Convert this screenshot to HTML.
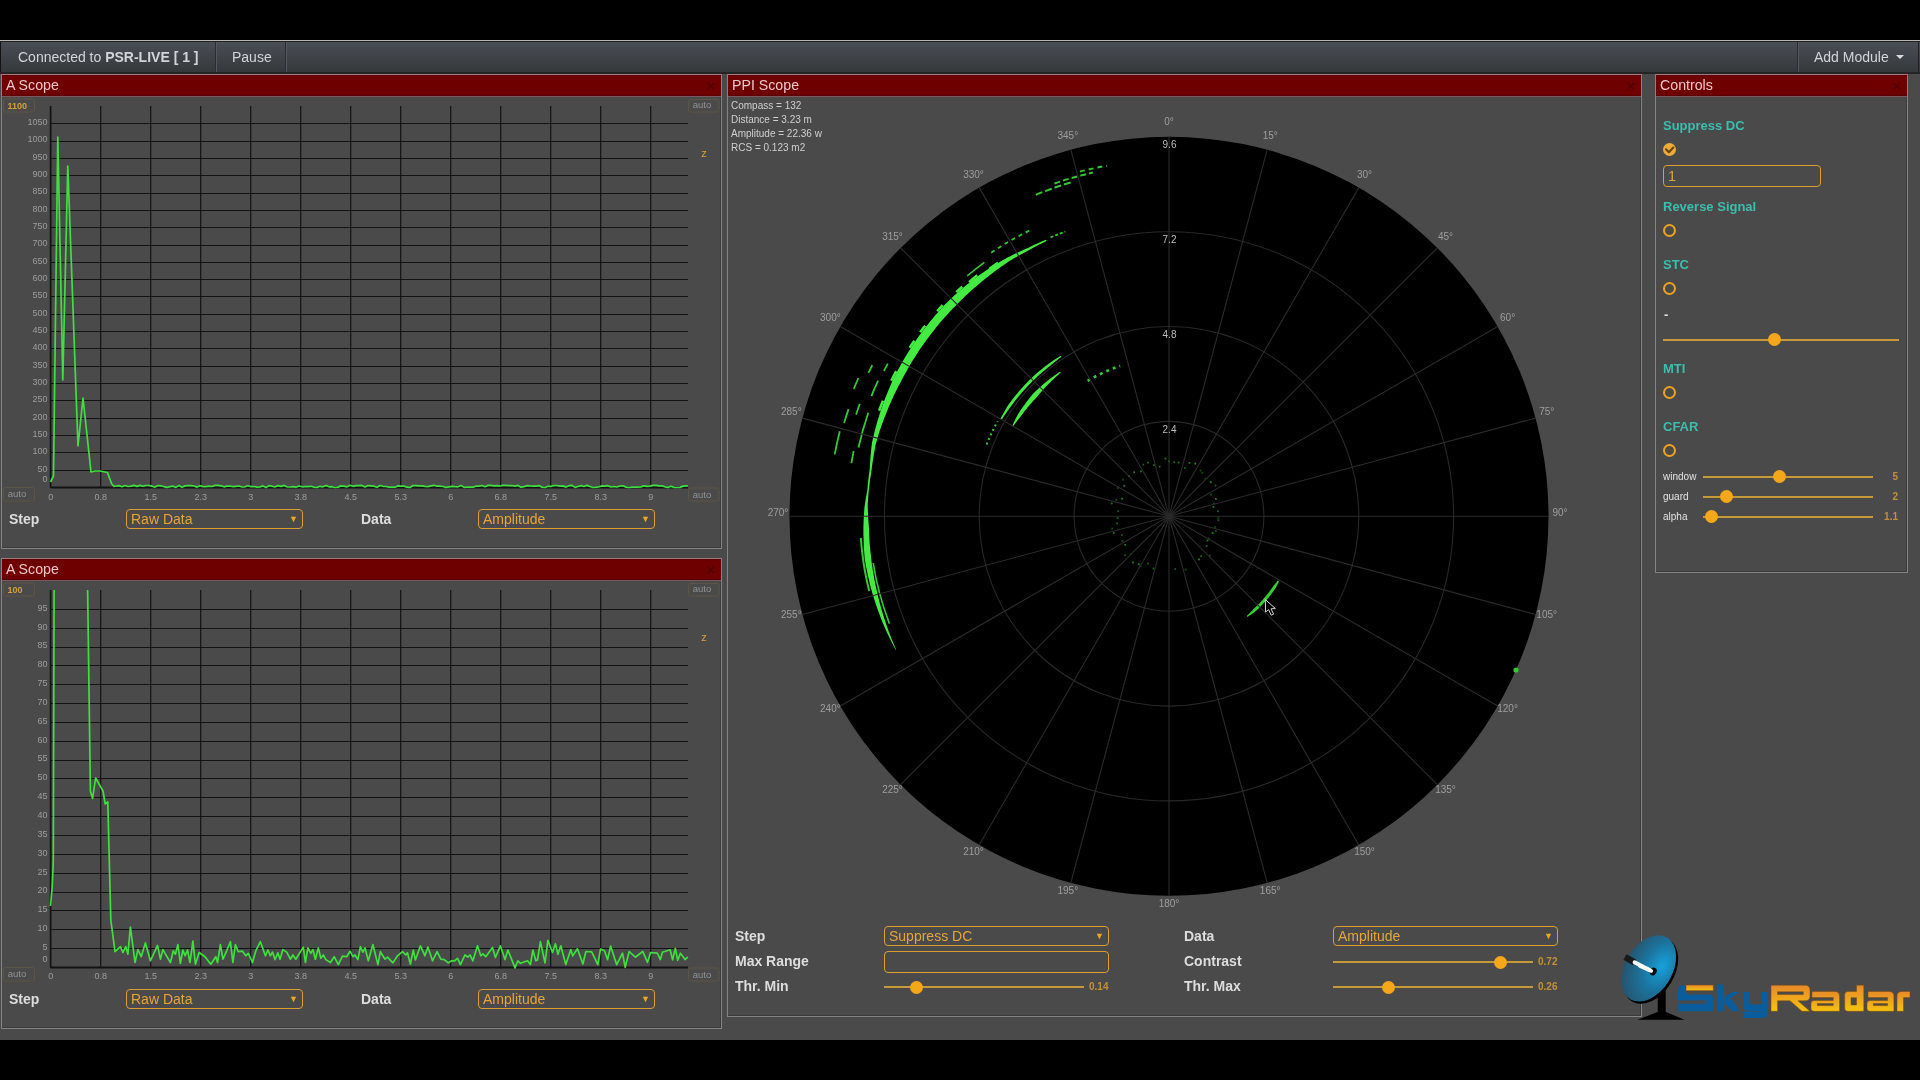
<!DOCTYPE html>
<html><head><meta charset="utf-8"><title>SkyRadar</title>
<style>
*{box-sizing:border-box;margin:0;padding:0}
html,body{width:1920px;height:1080px;overflow:hidden;background:#000;font-family:"Liberation Sans", sans-serif}
body{-webkit-font-smoothing:antialiased}
.aa{will-change:transform}
#app{position:absolute;left:0;top:40px;width:1920px;height:1000px;background:#4b4b4b}
#nav{position:absolute;left:0;top:40px;width:1920px;height:34px;border-top:1px solid #b8b8b8;
 background:linear-gradient(#202020 0,#202020 1px,#4b4f56 1px,#36393c 31px,#262626 31px,#262626 33px);}
.nv{position:absolute;top:1px;height:31px;color:#d2d6da;font-size:14px;line-height:31px}
.dv{position:absolute;top:1px;width:2px;height:30px;border-left:1px solid #2b2e31;border-right:1px solid #565a60}
.panel{position:absolute;background:#4b4b4b;border:1px solid #858585;border-top:none;box-shadow:inset -1px -1px 0 #3c3c3c}
.hdr{position:absolute;left:0;right:0;top:0;height:23px;background:#700000;border-top:1px solid #a87880;border-bottom:1px solid #7d5a60;box-shadow:inset 0 1px 1px #5a0008,inset 0 -1px 1px #5a0008;color:#f3c6cb;font-size:14.2px;line-height:21px;padding-left:4px}
.hdr i{position:absolute;right:6px;top:0;font-style:normal;font-weight:bold;font-size:15px;color:#560000}
.lbl{position:absolute;color:#dedede;font-size:14px;font-weight:bold;line-height:16px}
.sel{position:absolute;border:1.5px solid #dca030;border-radius:4px;color:#e6a63a;font-size:14px;line-height:18px;padding-left:4px}
.sel .ar{position:absolute;right:4px;top:0;font-size:9px;color:#f0a820}
svg{position:absolute;left:0;top:0}
.ctl{position:absolute;color:#3cbfae;font-size:13px;font-weight:bold;line-height:14px;margin-top:1px}
.rad{position:absolute;width:13px;height:13px;border:2px solid #f0a41e;border-radius:50%}
.trk{position:absolute;height:2px;background:#c89a3a}
.thm{position:absolute;width:13px;height:13px;border-radius:50%;background:#f5a81a}
.val{position:absolute;color:#c4913a;font-size:10px;font-weight:bold;line-height:10px;margin-top:1px}
.sm{position:absolute;color:#e3e3e3;font-size:10px;line-height:10px;margin-top:1px}
</style></head><body><div class="aa" style="position:absolute;left:0;top:0;width:1920px;height:1080px;opacity:0.999">
<div id="app"></div>
<div id="nav">
 <div style="position:absolute;left:0;top:1px;width:1px;height:30px;background:#141414"></div>
 <div style="position:absolute;left:1918px;top:1px;width:1px;height:30px;background:#222"></div>
 <div class="nv" style="left:18px">Connected to <b>PSR-LIVE [ 1 ]</b></div>
 <div class="dv" style="left:215px"></div>
 <div class="nv" style="left:232px">Pause</div>
 <div class="dv" style="left:285px"></div>
 <div class="dv" style="left:1797px"></div>
 <div class="nv" style="left:1814px">Add Module</div>
 <div style="position:absolute;left:1896px;top:14px;width:0;height:0;border-left:4px solid transparent;border-right:4px solid transparent;border-top:4px solid #dadde0"></div>
</div>

<div class="panel" style="left:1px;top:74px;width:721px;height:475px"><div class="hdr">A Scope<i>&#215;</i></div></div>
<div class="panel" style="left:1px;top:558px;width:721px;height:471px"><div class="hdr">A Scope<i>&#215;</i></div></div>
<div class="panel" style="left:727px;top:74px;width:915px;height:943px"><div class="hdr">PPI Scope<i>&#215;</i></div></div>
<div class="panel" style="left:1655px;top:74px;width:253px;height:499px"><div class="hdr">Controls<i>&#215;</i></div></div>

<svg width="1920" height="1080" style="font-family:"Liberation Sans", sans-serif">
<clipPath id="clip74"><rect x="0" y="106" width="720" height="391"/></clipPath>
<line x1="50.5" y1="470.5" x2="688" y2="470.5" stroke="#141414" stroke-width="1"/>
<line x1="50.5" y1="452.5" x2="688" y2="452.5" stroke="#141414" stroke-width="1"/>
<line x1="50.5" y1="435.5" x2="688" y2="435.5" stroke="#141414" stroke-width="1"/>
<line x1="50.5" y1="418.5" x2="688" y2="418.5" stroke="#141414" stroke-width="1"/>
<line x1="50.5" y1="400.5" x2="688" y2="400.5" stroke="#141414" stroke-width="1"/>
<line x1="50.5" y1="383.5" x2="688" y2="383.5" stroke="#141414" stroke-width="1"/>
<line x1="50.5" y1="366.5" x2="688" y2="366.5" stroke="#141414" stroke-width="1"/>
<line x1="50.5" y1="348.5" x2="688" y2="348.5" stroke="#141414" stroke-width="1"/>
<line x1="50.5" y1="331.5" x2="688" y2="331.5" stroke="#141414" stroke-width="1"/>
<line x1="50.5" y1="314.5" x2="688" y2="314.5" stroke="#141414" stroke-width="1"/>
<line x1="50.5" y1="296.5" x2="688" y2="296.5" stroke="#141414" stroke-width="1"/>
<line x1="50.5" y1="279.5" x2="688" y2="279.5" stroke="#141414" stroke-width="1"/>
<line x1="50.5" y1="262.5" x2="688" y2="262.5" stroke="#141414" stroke-width="1"/>
<line x1="50.5" y1="245.5" x2="688" y2="245.5" stroke="#141414" stroke-width="1"/>
<line x1="50.5" y1="227.5" x2="688" y2="227.5" stroke="#141414" stroke-width="1"/>
<line x1="50.5" y1="210.5" x2="688" y2="210.5" stroke="#141414" stroke-width="1"/>
<line x1="50.5" y1="193.5" x2="688" y2="193.5" stroke="#141414" stroke-width="1"/>
<line x1="50.5" y1="175.5" x2="688" y2="175.5" stroke="#141414" stroke-width="1"/>
<line x1="50.5" y1="158.5" x2="688" y2="158.5" stroke="#141414" stroke-width="1"/>
<line x1="50.5" y1="141.5" x2="688" y2="141.5" stroke="#141414" stroke-width="1"/>
<line x1="50.5" y1="123.5" x2="688" y2="123.5" stroke="#141414" stroke-width="1"/>
<line x1="50.7" y1="106" x2="50.7" y2="487.5" stroke="#121212" stroke-width="1.15"/>
<line x1="100.7" y1="106" x2="100.7" y2="487.5" stroke="#121212" stroke-width="1.15"/>
<line x1="150.7" y1="106" x2="150.7" y2="487.5" stroke="#121212" stroke-width="1.15"/>
<line x1="200.7" y1="106" x2="200.7" y2="487.5" stroke="#121212" stroke-width="1.15"/>
<line x1="250.7" y1="106" x2="250.7" y2="487.5" stroke="#121212" stroke-width="1.15"/>
<line x1="300.7" y1="106" x2="300.7" y2="487.5" stroke="#121212" stroke-width="1.15"/>
<line x1="350.7" y1="106" x2="350.7" y2="487.5" stroke="#121212" stroke-width="1.15"/>
<line x1="400.7" y1="106" x2="400.7" y2="487.5" stroke="#121212" stroke-width="1.15"/>
<line x1="450.7" y1="106" x2="450.7" y2="487.5" stroke="#121212" stroke-width="1.15"/>
<line x1="500.7" y1="106" x2="500.7" y2="487.5" stroke="#121212" stroke-width="1.15"/>
<line x1="550.7" y1="106" x2="550.7" y2="487.5" stroke="#121212" stroke-width="1.15"/>
<line x1="600.7" y1="106" x2="600.7" y2="487.5" stroke="#121212" stroke-width="1.15"/>
<line x1="650.7" y1="106" x2="650.7" y2="487.5" stroke="#121212" stroke-width="1.15"/>
<line x1="50.5" y1="487.5" x2="688" y2="487.5" stroke="#141414" stroke-width="2"/>
<line x1="50.5" y1="106" x2="50.5" y2="487.5" stroke="#141414" stroke-width="1.5"/>
<text x="47.5" y="481.8" font-size="9" fill="#9e9e9e" font-weight="normal" text-anchor="end" >0</text>
<text x="47.5" y="471.5" font-size="9" fill="#9e9e9e" font-weight="normal" text-anchor="end" >50</text>
<text x="47.5" y="454.1" font-size="9" fill="#9e9e9e" font-weight="normal" text-anchor="end" >100</text>
<text x="47.5" y="436.8" font-size="9" fill="#9e9e9e" font-weight="normal" text-anchor="end" >150</text>
<text x="47.5" y="419.5" font-size="9" fill="#9e9e9e" font-weight="normal" text-anchor="end" >200</text>
<text x="47.5" y="402.2" font-size="9" fill="#9e9e9e" font-weight="normal" text-anchor="end" >250</text>
<text x="47.5" y="384.9" font-size="9" fill="#9e9e9e" font-weight="normal" text-anchor="end" >300</text>
<text x="47.5" y="367.6" font-size="9" fill="#9e9e9e" font-weight="normal" text-anchor="end" >350</text>
<text x="47.5" y="350.2" font-size="9" fill="#9e9e9e" font-weight="normal" text-anchor="end" >400</text>
<text x="47.5" y="332.9" font-size="9" fill="#9e9e9e" font-weight="normal" text-anchor="end" >450</text>
<text x="47.5" y="315.6" font-size="9" fill="#9e9e9e" font-weight="normal" text-anchor="end" >500</text>
<text x="47.5" y="298.3" font-size="9" fill="#9e9e9e" font-weight="normal" text-anchor="end" >550</text>
<text x="47.5" y="281.0" font-size="9" fill="#9e9e9e" font-weight="normal" text-anchor="end" >600</text>
<text x="47.5" y="263.6" font-size="9" fill="#9e9e9e" font-weight="normal" text-anchor="end" >650</text>
<text x="47.5" y="246.3" font-size="9" fill="#9e9e9e" font-weight="normal" text-anchor="end" >700</text>
<text x="47.5" y="229.0" font-size="9" fill="#9e9e9e" font-weight="normal" text-anchor="end" >750</text>
<text x="47.5" y="211.7" font-size="9" fill="#9e9e9e" font-weight="normal" text-anchor="end" >800</text>
<text x="47.5" y="194.4" font-size="9" fill="#9e9e9e" font-weight="normal" text-anchor="end" >850</text>
<text x="47.5" y="177.1" font-size="9" fill="#9e9e9e" font-weight="normal" text-anchor="end" >900</text>
<text x="47.5" y="159.7" font-size="9" fill="#9e9e9e" font-weight="normal" text-anchor="end" >950</text>
<text x="47.5" y="142.4" font-size="9" fill="#9e9e9e" font-weight="normal" text-anchor="end" >1000</text>
<text x="47.5" y="125.1" font-size="9" fill="#9e9e9e" font-weight="normal" text-anchor="end" >1050</text>
<text x="50.8" y="499.8" font-size="9" fill="#9e9e9e" font-weight="normal" text-anchor="middle" >0</text>
<text x="100.8" y="499.8" font-size="9" fill="#9e9e9e" font-weight="normal" text-anchor="middle" >0.8</text>
<text x="150.8" y="499.8" font-size="9" fill="#9e9e9e" font-weight="normal" text-anchor="middle" >1.5</text>
<text x="200.8" y="499.8" font-size="9" fill="#9e9e9e" font-weight="normal" text-anchor="middle" >2.3</text>
<text x="250.8" y="499.8" font-size="9" fill="#9e9e9e" font-weight="normal" text-anchor="middle" >3</text>
<text x="300.8" y="499.8" font-size="9" fill="#9e9e9e" font-weight="normal" text-anchor="middle" >3.8</text>
<text x="350.8" y="499.8" font-size="9" fill="#9e9e9e" font-weight="normal" text-anchor="middle" >4.5</text>
<text x="400.8" y="499.8" font-size="9" fill="#9e9e9e" font-weight="normal" text-anchor="middle" >5.3</text>
<text x="450.8" y="499.8" font-size="9" fill="#9e9e9e" font-weight="normal" text-anchor="middle" >6</text>
<text x="500.8" y="499.8" font-size="9" fill="#9e9e9e" font-weight="normal" text-anchor="middle" >6.8</text>
<text x="550.8" y="499.8" font-size="9" fill="#9e9e9e" font-weight="normal" text-anchor="middle" >7.5</text>
<text x="600.8" y="499.8" font-size="9" fill="#9e9e9e" font-weight="normal" text-anchor="middle" >8.3</text>
<text x="650.8" y="499.8" font-size="9" fill="#9e9e9e" font-weight="normal" text-anchor="middle" >9</text>
<rect x="3.5" y="99.0" width="31" height="13" rx="2" fill="none" stroke="#5e5646" stroke-width="1"/>
<text x="7.5" y="108.6" font-size="9" fill="#d4a23a" font-weight="bold" text-anchor="start" >1100</text>
<rect x="688.5" y="99.5" width="30.5" height="12.5" rx="2" fill="none" stroke="#5e5646" stroke-width="1"/>
<text x="702.0" y="109.1" font-size="9.5" fill="#939393" font-weight="normal" text-anchor="middle" dy="-1">auto</text>
<rect x="3.5" y="487.5" width="31" height="13.5" rx="2" fill="none" stroke="#5e5646" stroke-width="1"/>
<text x="17.0" y="498.0" font-size="9.5" fill="#939393" font-weight="normal" text-anchor="middle" dy="-1">auto</text>
<rect x="688.5" y="488.0" width="30.5" height="13" rx="2" fill="none" stroke="#5e5646" stroke-width="1"/>
<text x="702.0" y="498.5" font-size="9.5" fill="#939393" font-weight="normal" text-anchor="middle" dy="-1">auto</text>
<text x="704.0" y="158.0" font-size="11" fill="#dca035" font-weight="normal" text-anchor="middle" dy="-1.5">z</text>
<polyline points="50.5,482.0 53.5,476.0 57.8,137.0 62.8,380.0 67.8,166.0 78.0,446.0 83.0,398.0 91.0,472.0 95.0,471.0 100.0,471.0 107.5,472.5 111.5,483.5 114.0,486.5 116.0,486.0 119.0,485.6 122.0,486.7 125.0,485.5 128.0,486.5 131.0,486.1 134.0,485.4 137.0,486.4 140.0,485.4 143.0,486.3 146.0,485.5 149.0,485.5 152.0,486.2 155.0,487.1 158.0,485.6 161.0,485.8 164.0,486.7 167.0,487.4 170.0,486.6 173.0,486.2 176.0,487.4 179.0,485.4 182.0,487.2 185.0,485.9 188.0,485.6 191.0,485.6 194.0,486.0 197.0,487.1 200.0,485.7 203.0,486.6 206.0,486.7 209.0,486.1 212.0,486.5 215.0,485.4 218.0,485.4 221.0,485.8 224.0,486.8 227.0,486.2 230.0,486.0 233.0,486.6 236.0,486.3 239.0,486.0 242.0,487.0 245.0,486.8 248.0,485.8 251.0,486.6 254.0,486.5 257.0,487.2 260.0,486.9 263.0,485.9 266.0,487.5 269.0,485.6 272.0,486.2 275.0,487.0 278.0,485.6 281.0,486.4 284.0,485.4 287.0,486.8 290.0,487.0 293.0,486.6 296.0,487.2 299.0,486.0 302.0,486.8 305.0,486.6 308.0,486.6 311.0,486.3 314.0,487.1 317.0,487.4 320.0,486.3 323.0,486.8 326.0,485.4 329.0,486.8 332.0,486.7 335.0,487.5 338.0,487.1 341.0,485.9 344.0,486.1 347.0,486.8 350.0,485.3 353.0,486.3 356.0,485.7 359.0,485.6 362.0,485.4 365.0,487.0 368.0,485.6 371.0,485.8 374.0,486.2 377.0,487.2 380.0,485.5 383.0,486.3 386.0,486.5 389.0,487.2 392.0,487.1 395.0,487.2 398.0,485.9 401.0,486.2 404.0,486.1 407.0,487.2 410.0,487.4 413.0,485.6 416.0,485.7 419.0,485.8 422.0,485.8 425.0,486.4 428.0,486.6 431.0,485.9 434.0,485.3 437.0,486.2 440.0,486.1 443.0,486.5 446.0,487.4 449.0,486.8 452.0,486.4 455.0,486.7 458.0,486.8 461.0,485.4 464.0,487.3 467.0,487.0 470.0,487.2 473.0,487.1 476.0,486.2 479.0,486.2 482.0,485.5 485.0,486.7 488.0,485.4 491.0,485.4 494.0,485.8 497.0,485.7 500.0,486.0 503.0,485.4 506.0,485.3 509.0,485.6 512.0,485.5 515.0,486.1 518.0,485.4 521.0,487.2 524.0,486.7 527.0,485.6 530.0,485.9 533.0,486.1 536.0,486.1 539.0,485.6 542.0,487.2 545.0,487.5 548.0,486.3 551.0,486.4 554.0,485.5 557.0,485.5 560.0,486.1 563.0,485.9 566.0,487.1 569.0,485.7 572.0,485.4 575.0,487.4 578.0,486.5 581.0,485.6 584.0,486.5 587.0,485.4 590.0,486.5 593.0,487.5 596.0,487.2 599.0,486.8 602.0,485.9 605.0,486.1 608.0,485.7 611.0,487.0 614.0,486.5 617.0,487.0 620.0,486.0 623.0,485.8 626.0,487.1 629.0,487.5 632.0,487.2 635.0,487.1 638.0,487.1 641.0,486.9 644.0,485.8 647.0,486.4 650.0,486.1 653.0,485.4 656.0,485.4 659.0,485.9 662.0,485.9 665.0,486.8 668.0,487.4 671.0,486.3 674.0,487.4 677.0,487.5 680.0,487.4 683.0,486.1 686.0,485.8 688.0,486.0" fill="none" stroke="#40e040" stroke-width="1.7" stroke-linejoin="round" clip-path="url(#clip74)"/>
<clipPath id="clip558"><rect x="0" y="590" width="720" height="387"/></clipPath>
<line x1="50.5" y1="948.5" x2="688" y2="948.5" stroke="#141414" stroke-width="1"/>
<line x1="50.5" y1="929.5" x2="688" y2="929.5" stroke="#141414" stroke-width="1"/>
<line x1="50.5" y1="910.5" x2="688" y2="910.5" stroke="#141414" stroke-width="1"/>
<line x1="50.5" y1="892.5" x2="688" y2="892.5" stroke="#141414" stroke-width="1"/>
<line x1="50.5" y1="873.5" x2="688" y2="873.5" stroke="#141414" stroke-width="1"/>
<line x1="50.5" y1="854.5" x2="688" y2="854.5" stroke="#141414" stroke-width="1"/>
<line x1="50.5" y1="835.5" x2="688" y2="835.5" stroke="#141414" stroke-width="1"/>
<line x1="50.5" y1="816.5" x2="688" y2="816.5" stroke="#141414" stroke-width="1"/>
<line x1="50.5" y1="797.5" x2="688" y2="797.5" stroke="#141414" stroke-width="1"/>
<line x1="50.5" y1="778.5" x2="688" y2="778.5" stroke="#141414" stroke-width="1"/>
<line x1="50.5" y1="760.5" x2="688" y2="760.5" stroke="#141414" stroke-width="1"/>
<line x1="50.5" y1="741.5" x2="688" y2="741.5" stroke="#141414" stroke-width="1"/>
<line x1="50.5" y1="722.5" x2="688" y2="722.5" stroke="#141414" stroke-width="1"/>
<line x1="50.5" y1="703.5" x2="688" y2="703.5" stroke="#141414" stroke-width="1"/>
<line x1="50.5" y1="684.5" x2="688" y2="684.5" stroke="#141414" stroke-width="1"/>
<line x1="50.5" y1="665.5" x2="688" y2="665.5" stroke="#141414" stroke-width="1"/>
<line x1="50.5" y1="647.5" x2="688" y2="647.5" stroke="#141414" stroke-width="1"/>
<line x1="50.5" y1="628.5" x2="688" y2="628.5" stroke="#141414" stroke-width="1"/>
<line x1="50.5" y1="609.5" x2="688" y2="609.5" stroke="#141414" stroke-width="1"/>
<line x1="50.7" y1="590" x2="50.7" y2="967.5" stroke="#121212" stroke-width="1.15"/>
<line x1="100.7" y1="590" x2="100.7" y2="967.5" stroke="#121212" stroke-width="1.15"/>
<line x1="150.7" y1="590" x2="150.7" y2="967.5" stroke="#121212" stroke-width="1.15"/>
<line x1="200.7" y1="590" x2="200.7" y2="967.5" stroke="#121212" stroke-width="1.15"/>
<line x1="250.7" y1="590" x2="250.7" y2="967.5" stroke="#121212" stroke-width="1.15"/>
<line x1="300.7" y1="590" x2="300.7" y2="967.5" stroke="#121212" stroke-width="1.15"/>
<line x1="350.7" y1="590" x2="350.7" y2="967.5" stroke="#121212" stroke-width="1.15"/>
<line x1="400.7" y1="590" x2="400.7" y2="967.5" stroke="#121212" stroke-width="1.15"/>
<line x1="450.7" y1="590" x2="450.7" y2="967.5" stroke="#121212" stroke-width="1.15"/>
<line x1="500.7" y1="590" x2="500.7" y2="967.5" stroke="#121212" stroke-width="1.15"/>
<line x1="550.7" y1="590" x2="550.7" y2="967.5" stroke="#121212" stroke-width="1.15"/>
<line x1="600.7" y1="590" x2="600.7" y2="967.5" stroke="#121212" stroke-width="1.15"/>
<line x1="650.7" y1="590" x2="650.7" y2="967.5" stroke="#121212" stroke-width="1.15"/>
<line x1="50.5" y1="967.5" x2="688" y2="967.5" stroke="#141414" stroke-width="2"/>
<line x1="50.5" y1="590" x2="50.5" y2="967.5" stroke="#141414" stroke-width="1.5"/>
<text x="47.5" y="961.8" font-size="9" fill="#9e9e9e" font-weight="normal" text-anchor="end" >0</text>
<text x="47.5" y="949.9" font-size="9" fill="#9e9e9e" font-weight="normal" text-anchor="end" >5</text>
<text x="47.5" y="931.1" font-size="9" fill="#9e9e9e" font-weight="normal" text-anchor="end" >10</text>
<text x="47.5" y="912.2" font-size="9" fill="#9e9e9e" font-weight="normal" text-anchor="end" >15</text>
<text x="47.5" y="893.4" font-size="9" fill="#9e9e9e" font-weight="normal" text-anchor="end" >20</text>
<text x="47.5" y="874.5" font-size="9" fill="#9e9e9e" font-weight="normal" text-anchor="end" >25</text>
<text x="47.5" y="855.7" font-size="9" fill="#9e9e9e" font-weight="normal" text-anchor="end" >30</text>
<text x="47.5" y="836.8" font-size="9" fill="#9e9e9e" font-weight="normal" text-anchor="end" >35</text>
<text x="47.5" y="818.0" font-size="9" fill="#9e9e9e" font-weight="normal" text-anchor="end" >40</text>
<text x="47.5" y="799.1" font-size="9" fill="#9e9e9e" font-weight="normal" text-anchor="end" >45</text>
<text x="47.5" y="780.3" font-size="9" fill="#9e9e9e" font-weight="normal" text-anchor="end" >50</text>
<text x="47.5" y="761.4" font-size="9" fill="#9e9e9e" font-weight="normal" text-anchor="end" >55</text>
<text x="47.5" y="742.6" font-size="9" fill="#9e9e9e" font-weight="normal" text-anchor="end" >60</text>
<text x="47.5" y="723.7" font-size="9" fill="#9e9e9e" font-weight="normal" text-anchor="end" >65</text>
<text x="47.5" y="704.9" font-size="9" fill="#9e9e9e" font-weight="normal" text-anchor="end" >70</text>
<text x="47.5" y="686.0" font-size="9" fill="#9e9e9e" font-weight="normal" text-anchor="end" >75</text>
<text x="47.5" y="667.2" font-size="9" fill="#9e9e9e" font-weight="normal" text-anchor="end" >80</text>
<text x="47.5" y="648.3" font-size="9" fill="#9e9e9e" font-weight="normal" text-anchor="end" >85</text>
<text x="47.5" y="629.5" font-size="9" fill="#9e9e9e" font-weight="normal" text-anchor="end" >90</text>
<text x="47.5" y="610.6" font-size="9" fill="#9e9e9e" font-weight="normal" text-anchor="end" >95</text>
<text x="50.8" y="979.3" font-size="9" fill="#9e9e9e" font-weight="normal" text-anchor="middle" >0</text>
<text x="100.8" y="979.3" font-size="9" fill="#9e9e9e" font-weight="normal" text-anchor="middle" >0.8</text>
<text x="150.8" y="979.3" font-size="9" fill="#9e9e9e" font-weight="normal" text-anchor="middle" >1.5</text>
<text x="200.8" y="979.3" font-size="9" fill="#9e9e9e" font-weight="normal" text-anchor="middle" >2.3</text>
<text x="250.8" y="979.3" font-size="9" fill="#9e9e9e" font-weight="normal" text-anchor="middle" >3</text>
<text x="300.8" y="979.3" font-size="9" fill="#9e9e9e" font-weight="normal" text-anchor="middle" >3.8</text>
<text x="350.8" y="979.3" font-size="9" fill="#9e9e9e" font-weight="normal" text-anchor="middle" >4.5</text>
<text x="400.8" y="979.3" font-size="9" fill="#9e9e9e" font-weight="normal" text-anchor="middle" >5.3</text>
<text x="450.8" y="979.3" font-size="9" fill="#9e9e9e" font-weight="normal" text-anchor="middle" >6</text>
<text x="500.8" y="979.3" font-size="9" fill="#9e9e9e" font-weight="normal" text-anchor="middle" >6.8</text>
<text x="550.8" y="979.3" font-size="9" fill="#9e9e9e" font-weight="normal" text-anchor="middle" >7.5</text>
<text x="600.8" y="979.3" font-size="9" fill="#9e9e9e" font-weight="normal" text-anchor="middle" >8.3</text>
<text x="650.8" y="979.3" font-size="9" fill="#9e9e9e" font-weight="normal" text-anchor="middle" >9</text>
<rect x="3.5" y="583.0" width="31" height="13" rx="2" fill="none" stroke="#5e5646" stroke-width="1"/>
<text x="7.5" y="592.6" font-size="9" fill="#d4a23a" font-weight="bold" text-anchor="start" >100</text>
<rect x="688.5" y="583.5" width="30.5" height="12.5" rx="2" fill="none" stroke="#5e5646" stroke-width="1"/>
<text x="702.0" y="593.1" font-size="9.5" fill="#939393" font-weight="normal" text-anchor="middle" dy="-1">auto</text>
<rect x="3.5" y="967.5" width="31" height="13.5" rx="2" fill="none" stroke="#5e5646" stroke-width="1"/>
<text x="17.0" y="978.0" font-size="9.5" fill="#939393" font-weight="normal" text-anchor="middle" dy="-1">auto</text>
<rect x="688.5" y="968.0" width="30.5" height="13" rx="2" fill="none" stroke="#5e5646" stroke-width="1"/>
<text x="702.0" y="978.5" font-size="9.5" fill="#939393" font-weight="normal" text-anchor="middle" dy="-1">auto</text>
<text x="704.0" y="642.0" font-size="11" fill="#dca035" font-weight="normal" text-anchor="middle" dy="-1.5">z</text>
<polyline points="50.5,906.0 52.2,887.0 53.3,861.0 54.2,560.0 87.2,560.0 90.4,791.0 92.6,798.5 95.6,778.0 103.0,791.0 105.2,804.0 107.8,802.0 110.8,920.0 115.0,951.7 120.4,946.7 122.9,952.5 125.8,946.7 127.9,954.2 130.4,927.1 135.0,962.5 137.9,949.6 141.2,956.7 145.4,942.9 150.4,960.8 157.5,945.4 160.4,959.2 162.9,949.6 170.4,962.5 173.3,950.8 175.4,954.2 177.9,944.6 180.4,963.3 182.9,950.0 185.0,955.8 187.5,950.0 190.0,962.5 192.9,941.2 195.4,964.2 199.2,952.5 205.0,956.7 210.8,964.2 215.8,956.7 217.5,962.5 220.4,944.6 222.9,959.2 226.7,950.8 230.4,941.7 232.9,962.5 235.4,944.6 238.3,951.7 242.5,951.2 245.8,955.8 248.3,953.3 252.5,962.5 255.8,950.8 260.4,941.7 265.4,955.8 267.9,950.0 270.4,955.8 272.5,952.1 275.0,959.6 277.9,952.9 280.0,959.2 282.9,949.6 286.7,952.1 290.4,959.2 292.9,955.0 295.8,959.2 303.3,947.1 305.4,962.5 307.9,947.9 310.8,953.3 312.9,949.6 315.4,959.2 318.3,947.9 320.8,958.3 323.3,955.0 325.8,959.6 330.4,962.5 334.2,956.7 338.3,964.6 342.5,956.2 346.7,956.7 350.0,951.2 352.9,956.7 355.0,955.0 357.9,959.6 360.4,946.7 362.9,952.1 365.0,947.9 368.3,960.8 372.9,944.6 377.9,964.6 380.4,951.7 385.0,959.2 387.5,957.1 392.9,962.9 397.5,955.8 402.5,951.7 405.8,955.0 407.5,952.9 410.4,964.2 413.3,950.0 415.4,960.0 420.4,945.8 425.0,955.8 427.9,947.1 432.5,960.8 437.1,951.7 440.8,959.2 444.2,959.6 448.3,962.9 451.7,960.8 454.6,960.8 457.5,958.3 460.4,964.6 465.0,955.0 467.9,957.1 470.0,955.0 472.9,960.8 477.5,945.8 480.8,955.8 482.9,953.8 485.8,956.7 492.5,947.5 495.4,957.5 500.4,945.8 505.0,959.6 507.9,950.0 515.0,967.9 517.9,960.8 520.4,963.3 527.5,960.8 530.4,964.6 532.9,950.0 535.8,960.8 537.5,960.0 540.4,941.7 545.0,962.9 547.9,940.4 552.5,952.5 555.4,943.8 557.9,954.2 560.8,945.8 565.8,964.6 570.8,949.6 572.7,955.9 577.4,948.8 582.9,964.0 585.9,951.5 591.7,951.8 597.8,964.7 600.5,949.1 604.5,950.8 607.6,959.6 610.6,946.1 616.7,964.7 622.5,953.2 625.2,967.4 629.2,951.5 635.3,957.2 642.8,951.5 647.5,962.3 650.6,952.5 657.3,953.2 660.4,959.6 662.4,952.2 670.2,949.8 672.6,959.9 675.3,948.4 677.7,960.3 680.4,953.2 685.1,959.6 687.8,956.9" fill="none" stroke="#40e040" stroke-width="1.7" stroke-linejoin="round" clip-path="url(#clip558)"/>
<circle cx="1169" cy="516.3" r="379.5" fill="#000"/>
<polygon points="895.5,649.7 894.3,647.3 893.1,645.0 891.9,642.6 890.7,640.2 889.5,637.8 888.4,635.4 887.2,633.0 886.1,630.6 885.0,628.2 884.0,625.7 882.9,623.3 881.9,620.8 880.9,618.3 880.0,615.8 879.1,613.3 878.1,610.8 877.2,608.3 876.4,605.8 875.5,603.2 874.7,600.7 873.9,598.1 873.1,595.6 872.3,593.0 871.6,590.4 870.9,587.9 870.2,585.3 869.6,582.7 869.0,580.1 868.3,577.5 867.8,574.9 867.2,572.2 866.7,569.6 866.1,567.0 865.7,564.3 865.2,561.7 864.7,559.1 864.5,556.4 864.3,553.7 864.1,551.0 863.9,548.4 863.8,545.7 863.7,543.0 863.6,540.3 863.5,537.7 863.4,535.0 863.4,532.3 863.4,529.6 863.4,527.0 863.5,524.3 863.6,521.6 863.7,519.0 863.9,516.3 864.0,513.6 864.2,511.0 864.4,508.3 864.7,505.7 865.1,503.0 865.5,500.4 865.9,497.8 866.4,495.1 866.9,492.5 867.4,489.9 867.6,487.3 867.8,484.6 868.1,482.0 868.4,479.4 868.7,476.8 869.0,474.1 869.4,471.5 869.7,468.9 869.9,466.2 870.0,463.6 870.2,460.9 870.4,458.3 870.6,455.6 870.9,452.9 871.1,450.3 871.4,447.6 871.7,444.9 872.1,442.3 872.7,439.7 873.3,437.1 873.9,434.5 874.5,431.9 875.2,429.3 875.9,426.7 876.6,424.1 877.3,421.5 878.1,419.0 878.9,416.4 879.7,413.8 880.5,411.3 881.4,408.8 882.3,406.2 883.2,403.7 884.1,401.2 885.0,398.7 886.0,396.2 887.0,393.7 888.0,391.2 889.1,388.7 890.1,386.3 891.2,383.8 892.3,381.3 893.4,378.9 894.6,376.5 895.8,374.1 897.0,371.7 898.3,369.3 899.6,367.0 900.9,364.6 902.2,362.3 903.5,359.9 904.9,357.6 906.3,355.3 907.7,353.0 909.1,350.7 910.6,348.5 912.0,346.2 913.5,344.0 915.0,341.7 916.5,339.5 918.1,337.3 919.7,335.1 921.3,333.0 922.9,330.8 924.5,328.7 926.1,326.6 927.8,324.4 929.5,322.3 931.2,320.3 932.9,318.2 934.6,316.1 936.4,314.1 938.2,312.1 940.0,310.1 941.8,308.1 943.6,306.1 945.4,304.1 947.3,302.2 949.2,300.3 951.1,298.4 953.1,296.6 955.1,294.7 957.1,293.0 959.1,291.2 961.1,289.5 963.2,287.7 965.3,286.0 967.3,284.3 969.4,282.7 971.6,281.0 973.7,279.4 975.8,277.7 978.0,276.2 980.1,274.6 982.4,273.1 984.6,271.6 986.8,270.1 989.0,268.6 991.3,267.2 993.6,265.7 995.8,264.3 998.1,263.0 1000.4,261.6 1002.7,260.3 1005.0,258.9 1007.4,257.6 1009.8,256.4 1012.1,255.2 1014.5,254.1 1016.9,252.9 1019.3,251.8 1021.8,250.7 1024.2,249.6 1026.6,248.5 1029.0,247.4 1031.4,246.2 1033.8,245.1 1036.2,244.0 1038.6,242.9 1041.0,241.8 1043.4,240.8 1045.9,239.7 1046.5,241.1 1044.1,242.2 1041.7,243.4 1039.4,244.6 1037.1,245.8 1034.7,247.0 1032.4,248.2 1030.1,249.5 1027.8,250.8 1025.5,252.0 1023.2,253.2 1020.9,254.5 1018.6,255.7 1016.3,257.0 1014.0,258.3 1011.7,259.7 1009.5,261.0 1007.3,262.5 1005.1,264.0 1003.0,265.5 1000.8,267.0 998.7,268.5 996.6,270.0 994.5,271.6 992.4,273.2 990.3,274.8 988.2,276.4 986.2,278.0 984.1,279.7 982.1,281.3 980.1,283.0 978.1,284.7 976.1,286.4 974.1,288.1 972.1,289.8 970.2,291.6 968.3,293.4 966.3,295.1 964.4,296.9 962.6,298.8 960.7,300.6 958.8,302.4 957.0,304.3 955.2,306.2 953.3,308.0 951.5,309.9 949.7,311.8 948.0,313.8 946.2,315.7 944.5,317.6 942.7,319.6 941.0,321.6 939.3,323.6 937.7,325.6 936.0,327.6 934.4,329.7 932.8,331.7 931.2,333.8 929.6,335.9 928.0,338.0 926.5,340.1 924.9,342.2 923.4,344.3 921.9,346.5 920.4,348.6 919.0,350.8 917.5,353.0 916.1,355.2 914.7,357.4 913.3,359.6 911.9,361.8 910.6,364.1 909.3,366.3 907.9,368.6 906.7,370.9 905.4,373.2 904.1,375.5 902.9,377.8 901.7,380.1 900.5,382.4 899.2,384.7 898.0,387.1 896.8,389.4 895.7,391.7 894.5,394.1 893.4,396.5 892.3,398.9 891.2,401.2 890.2,403.7 889.1,406.1 888.1,408.5 887.1,410.9 886.2,413.4 885.2,415.8 884.2,418.2 883.3,420.7 882.4,423.2 881.5,425.7 880.7,428.1 879.8,430.6 879.0,433.1 878.2,435.7 877.5,438.2 876.7,440.7 876.0,443.2 875.4,445.8 874.9,448.4 874.5,451.0 874.0,453.6 873.6,456.2 873.1,458.8 872.7,461.4 872.4,464.0 872.0,466.6 871.7,469.2 871.3,471.8 870.9,474.4 870.5,477.0 870.1,479.6 869.8,482.2 869.5,484.8 869.2,487.4 868.9,490.0 868.6,492.7 868.4,495.3 868.2,497.9 868.0,500.5 867.8,503.2 867.7,505.8 867.8,508.4 867.9,511.0 868.0,513.7 868.1,516.3 868.3,518.9 868.5,521.5 868.7,524.2 868.9,526.8 869.0,529.4 869.1,532.0 869.2,534.6 869.3,537.3 869.5,539.9 869.6,542.5 869.8,545.1 870.1,547.7 870.3,550.3 870.6,552.9 870.9,555.6 871.2,558.2 871.5,560.8 871.8,563.4 872.2,566.0 872.6,568.6 873.0,571.2 873.4,573.8 873.9,576.3 874.3,578.9 874.8,581.5 875.3,584.1 875.9,586.7 876.5,589.2 877.0,591.8 877.6,594.4 878.2,596.9 878.9,599.5 879.5,602.0 880.2,604.6 880.9,607.1 881.6,609.7 882.4,612.2 883.1,614.7 883.9,617.2 884.7,619.8 885.6,622.3 886.4,624.8 887.3,627.3 888.1,629.8 889.0,632.3 890.0,634.7 890.9,637.2 891.9,639.7 892.9,642.1 893.9,644.6 894.9,647.0 896.0,649.5" fill="#44ec44" opacity="1"/>
<path d="M869.2,591.1 A309,309 0 0 1 860.8,537.9" fill="none" stroke="#36c836" stroke-width="2" opacity="1"/>
<path d="M889.4,623.6 A299.5,299.5 0 0 1 873.2,563.2" fill="none" stroke="#36c836" stroke-width="1.6" opacity="1"/>
<path d="M879.1,410.8 A308.5,308.5 0 0 1 883.0,400.7" fill="none" stroke="#44ec44" stroke-width="2.5" opacity="1"/>
<path d="M891.3,380.8 A309,309 0 0 1 896.2,371.2" fill="none" stroke="#44ec44" stroke-width="2.5" opacity="1"/>
<path d="M909.6,347.8 A309.3,309.3 0 0 1 914.4,340.7" fill="none" stroke="#44ec44" stroke-width="2.5" opacity="1"/>
<path d="M920.2,332.2 A309.5,309.5 0 0 1 925.1,325.8" fill="none" stroke="#44ec44" stroke-width="2.5" opacity="1"/>
<path d="M937.2,311.2 A309.5,309.5 0 0 1 942.6,305.2" fill="none" stroke="#44ec44" stroke-width="2.5" opacity="1"/>
<path d="M956.3,292.2 A309,309 0 0 1 962.2,286.7" fill="none" stroke="#44ec44" stroke-width="2.5" opacity="1"/>
<path d="M969.0,282.1 A308,308 0 0 1 977.3,275.3" fill="none" stroke="#44ec44" stroke-width="2.5" opacity="1"/>
<path d="M989.1,268.7 A306,306 0 0 1 997.9,262.6" fill="none" stroke="#44ec44" stroke-width="2" opacity="1"/>
<path d="M853.8,388.9 A340,340 0 0 1 858.4,378.0" fill="none" stroke="#36c836" stroke-width="1.8" opacity="1"/>
<path d="M844.1,423.1 A338,338 0 0 1 848.5,409.1" fill="none" stroke="#36c836" stroke-width="1.8" opacity="1"/>
<path d="M834.7,454.3 A340,340 0 0 1 839.8,431.2" fill="none" stroke="#36c836" stroke-width="1.8" opacity="1"/>
<path d="M871.4,396.1 A321,321 0 0 1 878.1,380.6" fill="none" stroke="#36c836" stroke-width="1.8" opacity="1"/>
<path d="M858.5,447.5 A318,318 0 0 1 868.3,412.8" fill="none" stroke="#36c836" stroke-width="1.8" opacity="1"/>
<path d="M851.4,463.2 A322,322 0 0 1 853.7,451.0" fill="none" stroke="#36c836" stroke-width="1.8" opacity="1"/>
<path d="M883.9,371.0 A320,320 0 0 1 887.8,363.6" fill="none" stroke="#36c836" stroke-width="1.8" opacity="1"/>
<path d="M856.1,414.6 A329,329 0 0 1 859.8,403.8" fill="none" stroke="#36c836" stroke-width="1.8" opacity="1"/>
<path d="M868.4,372.9 A333,333 0 0 1 872.3,365.1" fill="none" stroke="#36c836" stroke-width="1.8" opacity="1"/>
<path d="M991.2,252.7 A318,318 0 0 1 1029.6,230.5" fill="none" stroke="#36c836" stroke-width="1.8" opacity="1" stroke-dasharray="4 4"/>
<path d="M967.2,275.8 A314,314 0 0 1 984.4,262.3" fill="none" stroke="#36c836" stroke-width="1.6" opacity="1"/>
<path d="M1050.6,237.4 A303,303 0 0 1 1065.4,231.6" fill="none" stroke="#36c836" stroke-width="1.8" opacity="1" stroke-dasharray="3 2"/>
<path d="M1035.8,194.8 A348,348 0 0 1 1073.1,181.8" fill="none" stroke="#36c836" stroke-width="2" opacity="1" stroke-dasharray="7 3"/>
<path d="M1054.4,183.5 A352,352 0 0 1 1092.8,172.6" fill="none" stroke="#36c836" stroke-width="2" opacity="1" stroke-dasharray="6 3"/>
<path d="M1079.9,171.6 A356,356 0 0 1 1107.2,165.7" fill="none" stroke="#36c836" stroke-width="2" opacity="1" stroke-dasharray="5 4"/>
<polygon points="1000.3,418.9 1001.1,417.4 1001.9,415.9 1002.8,414.4 1003.6,412.9 1004.4,411.5 1005.3,410.0 1006.2,408.5 1007.0,407.1 1007.9,405.6 1008.9,404.2 1009.9,402.8 1010.9,401.4 1011.9,400.1 1012.9,398.7 1014.0,397.4 1015.1,396.0 1016.1,394.7 1017.2,393.4 1018.3,392.1 1019.4,390.8 1020.5,389.5 1021.7,388.2 1022.8,387.0 1024.0,385.7 1025.1,384.5 1026.3,383.2 1027.5,382.0 1028.7,380.8 1029.9,379.6 1031.1,378.4 1032.4,377.3 1033.6,376.1 1034.9,375.0 1036.2,373.8 1037.4,372.7 1038.7,371.6 1040.0,370.5 1041.3,369.5 1042.7,368.4 1044.0,367.3 1045.3,366.3 1046.7,365.3 1048.0,364.2 1049.4,363.2 1050.8,362.3 1052.2,361.3 1053.6,360.3 1055.0,359.4 1056.4,358.5 1057.9,357.6 1059.3,356.7 1060.7,355.8 1061.4,356.8 1060.1,357.8 1058.7,358.8 1057.4,359.9 1056.1,360.9 1054.8,362.0 1053.5,363.0 1052.2,364.1 1050.9,365.2 1049.6,366.2 1048.3,367.3 1047.0,368.3 1045.7,369.4 1044.4,370.4 1043.1,371.5 1041.9,372.6 1040.6,373.7 1039.3,374.8 1038.1,375.9 1036.9,377.1 1035.7,378.2 1034.4,379.4 1033.2,380.5 1032.0,381.7 1030.9,382.9 1029.7,384.1 1028.5,385.3 1027.4,386.5 1026.2,387.7 1025.1,389.0 1023.9,390.2 1022.8,391.5 1021.7,392.7 1020.6,394.0 1019.6,395.3 1018.5,396.6 1017.4,397.9 1016.4,399.2 1015.3,400.5 1014.3,401.8 1013.3,403.2 1012.3,404.5 1011.3,405.9 1010.3,407.2 1009.3,408.6 1008.3,409.9 1007.3,411.3 1006.3,412.7 1005.4,414.1 1004.4,415.4 1003.5,416.8 1002.6,418.3 1001.6,419.7" fill="#44ec44" opacity="1"/>
<path d="M986.6,444.5 A196,196 0 0 1 997.6,421.3" fill="none" stroke="#36c836" stroke-width="2" opacity="1" stroke-dasharray="2 3"/>
<polygon points="1012.2,425.8 1012.9,424.4 1013.6,422.9 1014.3,421.5 1015.0,420.1 1015.7,418.6 1016.4,417.2 1017.2,415.8 1017.9,414.4 1018.8,413.0 1019.6,411.7 1020.5,410.4 1021.4,409.1 1022.3,407.8 1023.2,406.4 1024.2,405.2 1025.1,403.9 1026.0,402.6 1027.0,401.3 1028.0,400.0 1029.0,398.8 1030.0,397.5 1031.0,396.3 1032.0,395.1 1033.0,393.8 1034.1,392.7 1035.3,391.6 1036.4,390.5 1037.6,389.4 1038.8,388.3 1040.0,387.3 1041.1,386.2 1042.3,385.1 1043.5,384.1 1044.8,383.1 1046.0,382.1 1047.2,381.0 1048.5,380.1 1049.7,379.1 1051.0,378.1 1052.2,377.2 1053.5,376.2 1054.8,375.3 1056.1,374.4 1057.4,373.4 1058.7,372.6 1060.0,371.7 1060.7,372.6 1059.5,373.6 1058.4,374.7 1057.2,375.7 1056.0,376.8 1054.9,377.8 1053.7,378.9 1052.6,380.0 1051.4,381.1 1050.3,382.2 1049.2,383.3 1048.1,384.4 1047.0,385.5 1046.0,386.6 1044.9,387.8 1043.8,388.9 1042.8,390.1 1041.7,391.2 1040.7,392.4 1039.7,393.6 1038.7,394.8 1037.7,396.0 1036.7,397.2 1035.7,398.3 1034.6,399.5 1033.5,400.6 1032.5,401.8 1031.5,402.9 1030.4,404.1 1029.4,405.3 1028.4,406.5 1027.4,407.7 1026.5,408.9 1025.5,410.1 1024.5,411.3 1023.6,412.6 1022.7,413.8 1021.7,415.1 1020.8,416.3 1019.8,417.6 1018.8,418.8 1017.8,420.0 1016.9,421.2 1015.9,422.5 1015.0,423.8 1014.0,425.0 1013.1,426.3" fill="#44ec44" opacity="1"/>
<path d="M1087.6,380.9 A158,158 0 0 1 1120.2,366.0" fill="none" stroke="#36c836" stroke-width="2.6" opacity="1" stroke-dasharray="3 4"/>
<polygon points="1279.1,581.1 1278.6,582.2 1278.1,583.2 1277.6,584.2 1277.1,585.2 1276.6,586.2 1276.1,587.2 1275.5,588.2 1274.9,589.1 1274.3,590.0 1273.6,590.9 1273.0,591.8 1272.3,592.7 1271.6,593.6 1270.9,594.5 1270.3,595.4 1269.6,596.3 1268.9,597.2 1268.2,598.0 1267.4,598.9 1266.7,599.8 1266.0,600.6 1265.2,601.4 1264.5,602.3 1263.7,603.1 1263.0,603.9 1262.2,604.8 1261.4,605.6 1260.7,606.4 1259.9,607.2 1259.1,608.0 1258.3,608.7 1257.5,609.5 1256.6,610.3 1255.8,611.0 1255.0,611.8 1254.1,612.5 1253.2,613.1 1252.2,613.8 1251.3,614.4 1250.4,615.0 1249.4,615.6 1248.5,616.2 1247.6,616.9 1246.8,615.9 1247.6,615.1 1248.4,614.4 1249.2,613.6 1250.0,612.8 1250.7,612.0 1251.5,611.2 1252.2,610.4 1253.0,609.6 1253.8,608.8 1254.6,608.1 1255.4,607.3 1256.2,606.6 1257.0,605.8 1257.7,605.0 1258.5,604.3 1259.3,603.5 1260.0,602.7 1260.8,601.9 1261.5,601.1 1262.3,600.3 1263.0,599.5 1263.7,598.6 1264.4,597.8 1265.1,597.0 1265.8,596.1 1266.5,595.3 1267.2,594.4 1267.9,593.6 1268.6,592.7 1269.2,591.8 1269.9,591.0 1270.5,590.1 1271.2,589.2 1271.8,588.3 1272.4,587.4 1273.0,586.5 1273.7,585.6 1274.4,584.8 1275.1,583.9 1275.8,583.0 1276.5,582.2 1277.1,581.3 1277.8,580.4" fill="#34d034" opacity="1"/>
<circle cx="1516" cy="670" r="2.6" fill="#36c836"/>
<rect x="1168.0" y="460.5" width="1.8" height="1.8" fill="#2a9a2a" opacity="0.87"/>
<rect x="1173.4" y="461.2" width="1.8" height="1.8" fill="#2a9a2a" opacity="0.71"/>
<rect x="1177.7" y="461.7" width="1.8" height="1.8" fill="#2a9a2a" opacity="0.73"/>
<rect x="1184.0" y="467.2" width="1.8" height="1.8" fill="#2a9a2a" opacity="0.59"/>
<rect x="1188.6" y="462.0" width="1.8" height="1.8" fill="#2a9a2a" opacity="0.76"/>
<rect x="1194.3" y="462.7" width="1.8" height="1.8" fill="#2a9a2a" opacity="0.88"/>
<rect x="1199.6" y="469.7" width="1.8" height="1.8" fill="#2a9a2a" opacity="0.52"/>
<rect x="1201.5" y="472.0" width="1.8" height="1.8" fill="#2a9a2a" opacity="0.48"/>
<rect x="1204.3" y="477.8" width="1.8" height="1.8" fill="#2a9a2a" opacity="0.46"/>
<rect x="1209.8" y="481.2" width="1.8" height="1.8" fill="#2a9a2a" opacity="0.83"/>
<rect x="1214.6" y="484.6" width="1.8" height="1.8" fill="#2a9a2a" opacity="0.67"/>
<rect x="1210.2" y="493.7" width="1.8" height="1.8" fill="#2a9a2a" opacity="0.58"/>
<rect x="1215.0" y="498.0" width="1.8" height="1.8" fill="#2a9a2a" opacity="0.83"/>
<rect x="1213.0" y="502.6" width="1.8" height="1.8" fill="#2a9a2a" opacity="0.55"/>
<rect x="1212.5" y="506.0" width="1.8" height="1.8" fill="#2a9a2a" opacity="0.79"/>
<rect x="1217.2" y="510.3" width="1.8" height="1.8" fill="#2a9a2a" opacity="0.62"/>
<rect x="1217.4" y="517.1" width="1.8" height="1.8" fill="#2a9a2a" opacity="0.45"/>
<rect x="1217.6" y="519.4" width="1.8" height="1.8" fill="#2a9a2a" opacity="0.66"/>
<rect x="1214.0" y="526.2" width="1.8" height="1.8" fill="#2a9a2a" opacity="0.48"/>
<rect x="1214.9" y="530.1" width="1.8" height="1.8" fill="#2a9a2a" opacity="0.57"/>
<rect x="1211.8" y="532.1" width="1.8" height="1.8" fill="#2a9a2a" opacity="0.88"/>
<rect x="1208.0" y="537.7" width="1.8" height="1.8" fill="#2a9a2a" opacity="0.56"/>
<rect x="1206.6" y="539.6" width="1.8" height="1.8" fill="#2a9a2a" opacity="0.81"/>
<rect x="1205.8" y="545.0" width="1.8" height="1.8" fill="#2a9a2a" opacity="0.65"/>
<rect x="1209.1" y="554.6" width="1.8" height="1.8" fill="#2a9a2a" opacity="0.51"/>
<rect x="1200.2" y="555.3" width="1.8" height="1.8" fill="#2a9a2a" opacity="0.64"/>
<rect x="1198.2" y="558.5" width="1.8" height="1.8" fill="#2a9a2a" opacity="0.89"/>
<rect x="1184.8" y="568.8" width="1.8" height="1.8" fill="#2a9a2a" opacity="0.50"/>
<rect x="1174.3" y="568.1" width="1.8" height="1.8" fill="#2a9a2a" opacity="0.58"/>
<rect x="1152.6" y="567.6" width="1.8" height="1.8" fill="#2a9a2a" opacity="0.71"/>
<rect x="1147.2" y="562.7" width="1.8" height="1.8" fill="#2a9a2a" opacity="0.52"/>
<rect x="1139.7" y="565.3" width="1.8" height="1.8" fill="#2a9a2a" opacity="0.56"/>
<rect x="1137.8" y="563.3" width="1.8" height="1.8" fill="#2a9a2a" opacity="0.87"/>
<rect x="1132.0" y="561.5" width="1.8" height="1.8" fill="#2a9a2a" opacity="0.85"/>
<rect x="1129.9" y="553.3" width="1.8" height="1.8" fill="#2a9a2a" opacity="0.50"/>
<rect x="1124.1" y="554.2" width="1.8" height="1.8" fill="#2a9a2a" opacity="0.56"/>
<rect x="1124.3" y="543.9" width="1.8" height="1.8" fill="#2a9a2a" opacity="0.82"/>
<rect x="1121.6" y="540.0" width="1.8" height="1.8" fill="#2a9a2a" opacity="0.53"/>
<rect x="1121.1" y="534.1" width="1.8" height="1.8" fill="#2a9a2a" opacity="0.55"/>
<rect x="1112.9" y="532.0" width="1.8" height="1.8" fill="#2a9a2a" opacity="0.73"/>
<rect x="1111.2" y="527.7" width="1.8" height="1.8" fill="#2a9a2a" opacity="0.54"/>
<rect x="1116.2" y="522.4" width="1.8" height="1.8" fill="#2a9a2a" opacity="0.65"/>
<rect x="1116.6" y="517.1" width="1.8" height="1.8" fill="#2a9a2a" opacity="0.62"/>
<rect x="1117.3" y="510.2" width="1.8" height="1.8" fill="#2a9a2a" opacity="0.61"/>
<rect x="1110.8" y="502.5" width="1.8" height="1.8" fill="#2a9a2a" opacity="0.75"/>
<rect x="1115.5" y="498.8" width="1.8" height="1.8" fill="#2a9a2a" opacity="0.51"/>
<rect x="1121.3" y="497.8" width="1.8" height="1.8" fill="#2a9a2a" opacity="0.86"/>
<rect x="1116.9" y="487.1" width="1.8" height="1.8" fill="#2a9a2a" opacity="0.46"/>
<rect x="1123.3" y="484.9" width="1.8" height="1.8" fill="#2a9a2a" opacity="0.78"/>
<rect x="1122.1" y="478.7" width="1.8" height="1.8" fill="#2a9a2a" opacity="0.48"/>
<rect x="1128.3" y="475.3" width="1.8" height="1.8" fill="#2a9a2a" opacity="0.86"/>
<rect x="1133.2" y="471.4" width="1.8" height="1.8" fill="#2a9a2a" opacity="0.81"/>
<rect x="1140.0" y="470.5" width="1.8" height="1.8" fill="#2a9a2a" opacity="0.76"/>
<rect x="1142.4" y="463.7" width="1.8" height="1.8" fill="#2a9a2a" opacity="0.64"/>
<rect x="1147.2" y="461.7" width="1.8" height="1.8" fill="#2a9a2a" opacity="0.71"/>
<rect x="1153.1" y="464.2" width="1.8" height="1.8" fill="#2a9a2a" opacity="0.71"/>
<rect x="1158.7" y="465.7" width="1.8" height="1.8" fill="#2a9a2a" opacity="0.74"/>
<rect x="1164.5" y="457.7" width="1.8" height="1.8" fill="#2a9a2a" opacity="0.78"/>
<circle cx="1169" cy="516.3" r="94.9" fill="none" stroke="#292929" stroke-width="1.1"/>
<circle cx="1169" cy="516.3" r="189.8" fill="none" stroke="#292929" stroke-width="1.1"/>
<circle cx="1169" cy="516.3" r="284.6" fill="none" stroke="#292929" stroke-width="1.1"/>
<line x1="1169" y1="516.3" x2="1169.0" y2="136.8" stroke="#2c2c2c" stroke-width="1.1"/>
<line x1="1169" y1="516.3" x2="1267.2" y2="149.7" stroke="#2c2c2c" stroke-width="1.1"/>
<line x1="1169" y1="516.3" x2="1358.8" y2="187.6" stroke="#2c2c2c" stroke-width="1.1"/>
<line x1="1169" y1="516.3" x2="1437.3" y2="248.0" stroke="#2c2c2c" stroke-width="1.1"/>
<line x1="1169" y1="516.3" x2="1497.7" y2="326.5" stroke="#2c2c2c" stroke-width="1.1"/>
<line x1="1169" y1="516.3" x2="1535.6" y2="418.1" stroke="#2c2c2c" stroke-width="1.1"/>
<line x1="1169" y1="516.3" x2="1548.5" y2="516.3" stroke="#2c2c2c" stroke-width="1.1"/>
<line x1="1169" y1="516.3" x2="1535.6" y2="614.5" stroke="#2c2c2c" stroke-width="1.1"/>
<line x1="1169" y1="516.3" x2="1497.7" y2="706.0" stroke="#2c2c2c" stroke-width="1.1"/>
<line x1="1169" y1="516.3" x2="1437.3" y2="784.6" stroke="#2c2c2c" stroke-width="1.1"/>
<line x1="1169" y1="516.3" x2="1358.8" y2="845.0" stroke="#2c2c2c" stroke-width="1.1"/>
<line x1="1169" y1="516.3" x2="1267.2" y2="882.9" stroke="#2c2c2c" stroke-width="1.1"/>
<line x1="1169" y1="516.3" x2="1169.0" y2="895.8" stroke="#2c2c2c" stroke-width="1.1"/>
<line x1="1169" y1="516.3" x2="1070.8" y2="882.9" stroke="#2c2c2c" stroke-width="1.1"/>
<line x1="1169" y1="516.3" x2="979.2" y2="845.0" stroke="#2c2c2c" stroke-width="1.1"/>
<line x1="1169" y1="516.3" x2="900.7" y2="784.6" stroke="#2c2c2c" stroke-width="1.1"/>
<line x1="1169" y1="516.3" x2="840.3" y2="706.1" stroke="#2c2c2c" stroke-width="1.1"/>
<line x1="1169" y1="516.3" x2="802.4" y2="614.5" stroke="#2c2c2c" stroke-width="1.1"/>
<line x1="1169" y1="516.3" x2="789.5" y2="516.3" stroke="#2c2c2c" stroke-width="1.1"/>
<line x1="1169" y1="516.3" x2="802.4" y2="418.1" stroke="#2c2c2c" stroke-width="1.1"/>
<line x1="1169" y1="516.3" x2="840.3" y2="326.5" stroke="#2c2c2c" stroke-width="1.1"/>
<line x1="1169" y1="516.3" x2="900.7" y2="248.0" stroke="#2c2c2c" stroke-width="1.1"/>
<line x1="1169" y1="516.3" x2="979.2" y2="187.6" stroke="#2c2c2c" stroke-width="1.1"/>
<line x1="1169" y1="516.3" x2="1070.8" y2="149.7" stroke="#2c2c2c" stroke-width="1.1"/>
<text x="1169.5" y="432.6" font-size="10" fill="#bdbdbd" font-weight="normal" text-anchor="middle" >2.4</text>
<text x="1169.5" y="337.7" font-size="10" fill="#bdbdbd" font-weight="normal" text-anchor="middle" >4.8</text>
<text x="1169.5" y="242.8" font-size="10" fill="#bdbdbd" font-weight="normal" text-anchor="middle" >7.2</text>
<text x="1169.5" y="147.9" font-size="10" fill="#bdbdbd" font-weight="normal" text-anchor="middle" >9.6</text>
<text x="1169.0" y="125.4" font-size="10" fill="#9f9f9f" font-weight="normal" text-anchor="middle" >0°</text>
<text x="1270.2" y="138.8" font-size="10" fill="#9f9f9f" font-weight="normal" text-anchor="middle" >15°</text>
<text x="1364.5" y="177.8" font-size="10" fill="#9f9f9f" font-weight="normal" text-anchor="middle" >30°</text>
<text x="1445.5" y="240.0" font-size="10" fill="#9f9f9f" font-weight="normal" text-anchor="middle" >45°</text>
<text x="1507.6" y="320.9" font-size="10" fill="#9f9f9f" font-weight="normal" text-anchor="middle" >60°</text>
<text x="1546.7" y="415.2" font-size="10" fill="#9f9f9f" font-weight="normal" text-anchor="middle" >75°</text>
<text x="1560.0" y="516.4" font-size="10" fill="#9f9f9f" font-weight="normal" text-anchor="middle" >90°</text>
<text x="1546.7" y="617.6" font-size="10" fill="#9f9f9f" font-weight="normal" text-anchor="middle" >105°</text>
<text x="1507.6" y="711.9" font-size="10" fill="#9f9f9f" font-weight="normal" text-anchor="middle" >120°</text>
<text x="1445.5" y="792.9" font-size="10" fill="#9f9f9f" font-weight="normal" text-anchor="middle" >135°</text>
<text x="1364.5" y="855.1" font-size="10" fill="#9f9f9f" font-weight="normal" text-anchor="middle" >150°</text>
<text x="1270.2" y="894.1" font-size="10" fill="#9f9f9f" font-weight="normal" text-anchor="middle" >165°</text>
<text x="1169.0" y="907.4" font-size="10" fill="#9f9f9f" font-weight="normal" text-anchor="middle" >180°</text>
<text x="1067.8" y="894.1" font-size="10" fill="#9f9f9f" font-weight="normal" text-anchor="middle" >195°</text>
<text x="973.5" y="855.1" font-size="10" fill="#9f9f9f" font-weight="normal" text-anchor="middle" >210°</text>
<text x="892.5" y="792.9" font-size="10" fill="#9f9f9f" font-weight="normal" text-anchor="middle" >225°</text>
<text x="830.4" y="711.9" font-size="10" fill="#9f9f9f" font-weight="normal" text-anchor="middle" >240°</text>
<text x="791.3" y="617.6" font-size="10" fill="#9f9f9f" font-weight="normal" text-anchor="middle" >255°</text>
<text x="778.0" y="516.4" font-size="10" fill="#9f9f9f" font-weight="normal" text-anchor="middle" >270°</text>
<text x="791.3" y="415.2" font-size="10" fill="#9f9f9f" font-weight="normal" text-anchor="middle" >285°</text>
<text x="830.4" y="320.9" font-size="10" fill="#9f9f9f" font-weight="normal" text-anchor="middle" >300°</text>
<text x="892.5" y="240.0" font-size="10" fill="#9f9f9f" font-weight="normal" text-anchor="middle" >315°</text>
<text x="973.5" y="177.8" font-size="10" fill="#9f9f9f" font-weight="normal" text-anchor="middle" >330°</text>
<text x="1067.8" y="138.8" font-size="10" fill="#9f9f9f" font-weight="normal" text-anchor="middle" >345°</text>
<text x="731.0" y="108.6" font-size="10" fill="#d0d0d0" font-weight="normal" text-anchor="start" >Compass = 132</text>
<text x="731.0" y="122.8" font-size="10" fill="#d0d0d0" font-weight="normal" text-anchor="start" >Distance = 3.23 m</text>
<text x="731.0" y="137.0" font-size="10" fill="#d0d0d0" font-weight="normal" text-anchor="start" >Amplitude = 22.36 w</text>
<text x="731.0" y="151.2" font-size="10" fill="#d0d0d0" font-weight="normal" text-anchor="start" >RCS = 0.123 m2</text>

<defs>
 <radialGradient id="dishg" cx="0.72" cy="0.38" r="0.8">
  <stop offset="0" stop-color="#17a3de"/><stop offset="0.45" stop-color="#1c759f"/><stop offset="1" stop-color="#294f66"/>
 </radialGradient>
 <linearGradient id="radg" x1="0" y1="0" x2="0" y2="1">
  <stop offset="0" stop-color="#e88a2a"/><stop offset="1" stop-color="#f6c410"/>
 </linearGradient>
</defs>
<polygon points="1637.5,1019.8 1684.5,1019.8 1666,1012 1657.5,1012" fill="#000"/>
<rect x="1657.7" y="990" width="8" height="24" fill="#000"/>
<ellipse cx="1650.6" cy="970.6" rx="23.8" ry="36" transform="rotate(31 1650.6 970.6)" fill="#000"/>
<ellipse cx="1648.6" cy="968.4" rx="23.8" ry="36" transform="rotate(31 1648.6 968.4)" fill="url(#dishg)"/>
<line x1="1625" y1="957" x2="1634.5" y2="962.3" stroke="#1a1a1a" stroke-width="6.5" stroke-linecap="butt"/>
<line x1="1634.5" y1="962.3" x2="1652" y2="971.3" stroke="#fff" stroke-width="3.8" stroke-linecap="round"/>
<ellipse cx="1653.2" cy="971.5" rx="3.3" ry="4" transform="rotate(31 1653.2 971.5)" fill="#0d0d0d"/>
<line x1="1640" y1="966" x2="1651.3" y2="971" stroke="#fff" stroke-width="3.6" stroke-linecap="round"/>

<g fill="#0b5e9e">
 <path d="M1686,985 H1683 Q1678,985 1678,990 V1000.5 H1706 V1003.75 H1678 V1011.25 H1713.7 V999.5 Q1713.7,994.5 1708.7,994.5 H1686 Z"/>
 <rect x="1718" y="984.5" width="6" height="26.7"/>
 <polygon points="1723.5,997.5 1732.5,992 1739.5,992 1726.5,1001.5 1723.5,1001.5"/>
 <polygon points="1726,999.5 1732,999.5 1739.5,1011.2 1732.5,1011.2 1724,1003"/>
 <path d="M1743.4,992 H1749.4 V1004.5 H1761.9 V992 H1767.8 V1013 Q1767.8,1018 1762.8,1018 H1743.4 V1011.5 H1761.9 V1011 H1748.4 Q1743.4,1011 1743.4,1006 Z"/>
</g>
<g fill="url(#radg)" stroke="#7a4a10" stroke-width="0.5">
 <rect x="1686" y="985" width="27.2" height="5.6"/>
 <path d="M1771,985.2 H1805 Q1810,985.2 1810,990.2 V996 Q1810,1000.8 1805,1000.8 H1798 L1810,1011.3 H1802 L1790,1000.8 H1777.6 V1011.3 H1771 Z M1777.6,991.8 V994.5 H1803.3 V991.8 Z" fill-rule="evenodd"/>
 <path d="M1814,991.4 H1834.6 Q1839.6,991.4 1839.6,996.4 V1011.3 H1814 Q1811,1011.3 1811,1008.3 V1003.5 Q1811,1000.6 1814,1000.6 H1833.3 V997.6 H1812 V991.4 Z M1817.3,1003.6 V1005.6 H1833.3 V1003.6 Z" fill-rule="evenodd"/>
 <path d="M1856.5,985.2 H1863.8 V1011.3 H1848 Q1844.7,1011.3 1844.7,1008 V994.7 Q1844.7,991.4 1848,991.4 H1856.5 Z M1851,997.7 V1004.9 H1856.5 V997.7 Z" fill-rule="evenodd"/>
 <path d="M1870,991.4 H1889 Q1893.9,991.4 1893.9,996.4 V1011.3 H1870 Q1867,1011.3 1867,1008.3 V1003.5 Q1867,1000.6 1870,1000.6 H1887.6 V997.6 H1868 V991.4 Z M1873.3,1003.6 V1005.6 H1887.6 V1003.6 Z" fill-rule="evenodd"/>
 <path d="M1897,996 Q1897,991.4 1902,991.4 H1910 V997.6 H1903.5 V1011.3 H1897 Z"/>
</g>
<path d="M1265.3,599.5 L1265.6,612 L1268.6,609.6 L1271.2,615.2 L1273.6,614.2 L1271,608.8 L1275.4,608.6 Z" fill="#000" stroke="#d8d8d8" stroke-width="1" stroke-linejoin="round"/>

</svg>

<!-- scope 1 controls -->
<div class="lbl" style="left:9px;top:511px">Step</div>
<div class="sel" style="left:126px;top:508.5px;width:177px;height:20.5px">Raw Data<span class="ar">&#9660;</span></div>
<div class="lbl" style="left:361px;top:511px">Data</div>
<div class="sel" style="left:478px;top:508.5px;width:177px;height:20.5px">Amplitude<span class="ar">&#9660;</span></div>
<!-- scope 2 controls -->
<div class="lbl" style="left:9px;top:990.5px">Step</div>
<div class="sel" style="left:126px;top:988.5px;width:177px;height:20.5px">Raw Data<span class="ar">&#9660;</span></div>
<div class="lbl" style="left:361px;top:990.5px">Data</div>
<div class="sel" style="left:478px;top:988.5px;width:177px;height:20.5px">Amplitude<span class="ar">&#9660;</span></div>

<!-- PPI controls -->
<div class="lbl" style="left:735px;top:928px">Step</div>
<div class="sel" style="left:884px;top:926px;width:225px;height:20px">Suppress DC<span class="ar">&#9660;</span></div>
<div class="lbl" style="left:735px;top:953px">Max Range</div>
<div class="sel" style="left:884px;top:951px;width:225px;height:22px"></div>
<div class="lbl" style="left:735px;top:978px">Thr. Min</div>
<div class="trk" style="left:884px;top:986px;width:200px"></div>
<div class="thm" style="left:910px;top:980.5px"></div>
<div class="val" style="left:1089px;top:981px">0.14</div>
<div class="lbl" style="left:1184px;top:928px">Data</div>
<div class="sel" style="left:1333px;top:926px;width:225px;height:20px">Amplitude<span class="ar">&#9660;</span></div>
<div class="lbl" style="left:1184px;top:953px">Contrast</div>
<div class="trk" style="left:1333px;top:961px;width:200px"></div>
<div class="thm" style="left:1494px;top:955.5px"></div>
<div class="val" style="left:1538px;top:956px">0.72</div>
<div class="lbl" style="left:1184px;top:978px">Thr. Max</div>
<div class="trk" style="left:1333px;top:986px;width:200px"></div>
<div class="thm" style="left:1382px;top:980.5px"></div>
<div class="val" style="left:1538px;top:981px">0.26</div>

<!-- Controls -->
<div class="ctl" style="left:1663px;top:118px">Suppress DC</div>
<div class="rad" style="left:1663px;top:143px;background:#eeac3a;border-color:#eeac3a"></div>
<svg width="1920" height="1080" style="pointer-events:none"><polyline points="1666,149.3 1668.9,152.2 1673.3,147.6" fill="none" stroke="#6a4800" stroke-width="2.1" stroke-linecap="round" stroke-linejoin="round"/></svg>
<div class="sel" style="left:1663px;top:165px;width:158px;height:22px;font-size:14.5px;line-height:20px;color:#dca44a">1</div>
<div class="ctl" style="left:1663px;top:199px">Reverse Signal</div>
<div class="rad" style="left:1663px;top:223.5px"></div>
<div class="ctl" style="left:1663px;top:257px">STC</div>
<div class="rad" style="left:1663px;top:282px"></div>
<div class="sm" style="left:1664px;top:307px;font-size:13px;font-weight:bold;line-height:14px">-</div>
<div class="trk" style="left:1663px;top:339px;width:236px"></div>
<div class="thm" style="left:1768px;top:333px"></div>
<div class="ctl" style="left:1663px;top:361px">MTI</div>
<div class="rad" style="left:1663px;top:385.5px"></div>
<div class="ctl" style="left:1663px;top:419px">CFAR</div>
<div class="rad" style="left:1663px;top:444px"></div>
<div class="sm" style="left:1663px;top:471px">window</div>
<div class="trk" style="left:1703px;top:476px;width:170px"></div>
<div class="thm" style="left:1773px;top:470px"></div>
<div class="val" style="left:1880px;top:471px;width:18px;text-align:right">5</div>
<div class="sm" style="left:1663px;top:491px">guard</div>
<div class="trk" style="left:1703px;top:496px;width:170px"></div>
<div class="thm" style="left:1719.5px;top:490px"></div>
<div class="val" style="left:1880px;top:491px;width:18px;text-align:right">2</div>
<div class="sm" style="left:1663px;top:511px">alpha</div>
<div class="trk" style="left:1703px;top:516px;width:170px"></div>
<div class="thm" style="left:1704.5px;top:510px"></div>
<div class="val" style="left:1880px;top:511px;width:18px;text-align:right">1.1</div>
</div></body></html>
